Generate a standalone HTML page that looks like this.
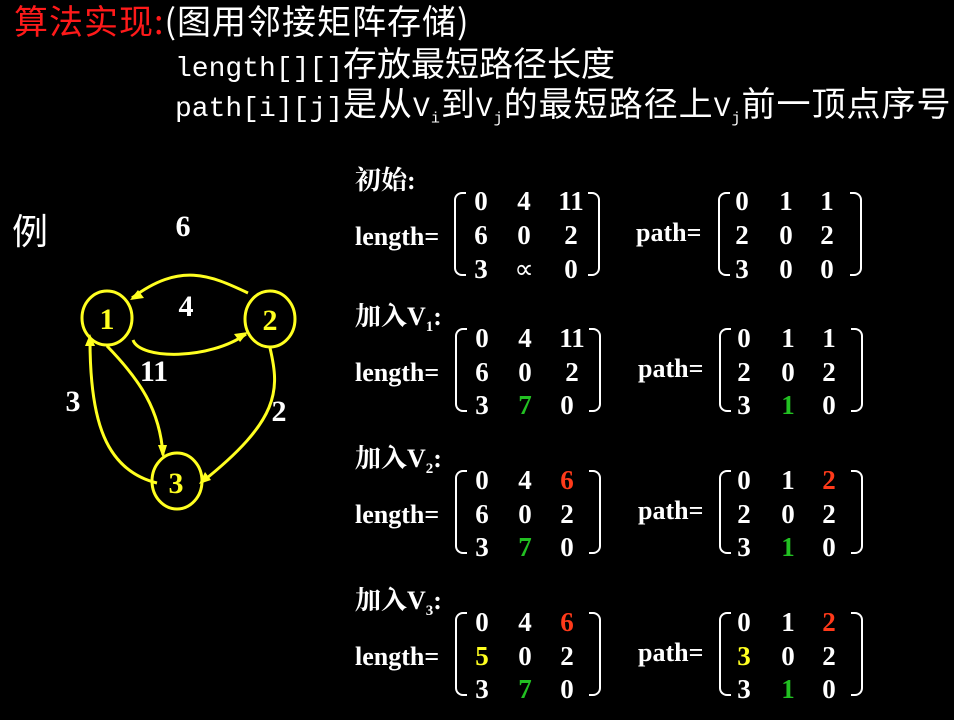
<!DOCTYPE html>
<html><head><meta charset="utf-8"><style>
body{margin:0;width:954px;height:720px;background:#000;overflow:hidden;position:relative;color:#fff}
.a{position:absolute;white-space:nowrap}
.h{font-family:"WenQuanYi Zen Hei","Noto Sans CJK SC",sans-serif;font-size:34px;line-height:36px}
.m{font-family:"Liberation Mono",monospace;font-size:28px}
.n{font-family:"Liberation Serif",serif;font-weight:bold;font-size:27px;line-height:26px;text-align:center;width:34px}
.l{font-family:"Liberation Serif","Noto Serif CJK SC",serif;font-weight:bold;font-size:26px}
.br{position:absolute;width:10px;border:2px solid #fff;border-radius:6px}
.g{color:#22c022}.r{color:#ff3a1a}.y{color:#ffff20}
sub{font-size:15px}
</style></head><body>
<div class="a h" style="left:14px;top:2px;letter-spacing:1px"><span style="color:#ff1a1a">算法实现:</span>(图用邻接矩阵存储)</div>
<div class="a h" style="left:175px;top:44px"><span class="m">length[][]</span>存放最短路径长度</div>
<div class="a h" style="left:175px;top:84px;letter-spacing:1px"><span class="m" style="letter-spacing:0">path[i][j]</span>是从<span class="m">V<sub>i</sub></span>到<span class="m">V<sub>j</sub></span>的最短路径上<span class="m">V<sub>j</sub></span>前一顶点序号</div>
<div class="a" style="left:12px;top:203px;font-family:'WenQuanYi Zen Hei',sans-serif;font-size:36px">例</div>
<svg class="a" style="left:0;top:0" width="340" height="520" viewBox="0 0 340 520">
<g fill="none" stroke="#ffff20" stroke-width="3">
<ellipse cx="107" cy="318" rx="25" ry="27"/>
<ellipse cx="270" cy="319" rx="25" ry="28"/>
<ellipse cx="177" cy="481" rx="25" ry="28"/>
<path d="M248 293 C210 275 180 262 132 298"/>
<path d="M133 340 C140 360 210 360 246 334"/>
<path d="M107 346 C140 380 160 410 163 455"/>
<path d="M157 483 C105 470 90 420 90 340"/>
<path d="M270 348 C280 390 280 420 202 482"/>
</g>
<g fill="#ffff20">
<path d="M130 300 l14 -2 l-6 -8z"/>
<path d="M248 332 l-14 2 l6 8z"/>
<path d="M163 458 l-5 -13 l9 0z"/>
<path d="M90 334 l-5 12 l10 0z"/>
<path d="M199 484 l6 -12 l6 8z"/>
</g>
<g font-family="Liberation Serif" font-weight="bold" font-size="30" fill="#ffff20" text-anchor="middle">
<text x="107" y="329">1</text><text x="270" y="330">2</text><text x="176" y="493">3</text></g>
<g font-family="Liberation Serif" font-size="30" fill="#fff" text-anchor="middle" font-weight="bold">
<text x="183" y="236">6</text><text x="186" y="316">4</text><text x="154" y="381">11</text><text x="73" y="411">3</text><text x="279" y="421">2</text></g>
</svg>

<div class="a l" style="left:355px;top:160px">初始:</div>
<div class="a l" style="left:355px;top:296px">加入V<sub>1</sub>:</div>
<div class="a l" style="left:355px;top:438px">加入V<sub>2</sub>:</div>
<div class="a l" style="left:355px;top:580px">加入V<sub>3</sub>:</div>

<div class="a l" style="left:355px;top:222px">length=</div>
<div class="a l" style="left:636px;top:218px">path=</div>
<div class="a l" style="left:355px;top:358px">length=</div>
<div class="a l" style="left:638px;top:354px">path=</div>
<div class="a l" style="left:355px;top:500px">length=</div>
<div class="a l" style="left:638px;top:496px">path=</div>
<div class="a l" style="left:355px;top:642px">length=</div>
<div class="a l" style="left:638px;top:638px">path=</div>

<div class="br" style="left:454px;top:192px;height:80px;border-right:none;border-radius:8px 0 0 8px"></div>
<div class="br" style="left:588px;top:192px;height:80px;border-left:none;border-radius:0 8px 8px 0"></div>
<div class="br" style="left:718px;top:192px;height:80px;border-right:none;border-radius:8px 0 0 8px"></div>
<div class="br" style="left:850px;top:192px;height:80px;border-left:none;border-radius:0 8px 8px 0"></div>
<div class="br" style="left:455px;top:328px;height:80px;border-right:none;border-radius:8px 0 0 8px"></div>
<div class="br" style="left:589px;top:328px;height:80px;border-left:none;border-radius:0 8px 8px 0"></div>
<div class="br" style="left:719px;top:328px;height:80px;border-right:none;border-radius:8px 0 0 8px"></div>
<div class="br" style="left:851px;top:328px;height:80px;border-left:none;border-radius:0 8px 8px 0"></div>
<div class="br" style="left:455px;top:470px;height:80px;border-right:none;border-radius:8px 0 0 8px"></div>
<div class="br" style="left:589px;top:470px;height:80px;border-left:none;border-radius:0 8px 8px 0"></div>
<div class="br" style="left:719px;top:470px;height:80px;border-right:none;border-radius:8px 0 0 8px"></div>
<div class="br" style="left:851px;top:470px;height:80px;border-left:none;border-radius:0 8px 8px 0"></div>
<div class="br" style="left:455px;top:612px;height:80px;border-right:none;border-radius:8px 0 0 8px"></div>
<div class="br" style="left:589px;top:612px;height:80px;border-left:none;border-radius:0 8px 8px 0"></div>
<div class="br" style="left:719px;top:612px;height:80px;border-right:none;border-radius:8px 0 0 8px"></div>
<div class="br" style="left:851px;top:612px;height:80px;border-left:none;border-radius:0 8px 8px 0"></div>

<div class="a n" style="left:464px;top:188px">0</div><div class="a n" style="left:507px;top:188px">4</div><div class="a n" style="left:554px;top:188px">11</div>
<div class="a n" style="left:464px;top:222px">6</div><div class="a n" style="left:507px;top:222px">0</div><div class="a n" style="left:554px;top:222px">2</div>
<div class="a n" style="left:464px;top:256px">3</div><div class="a n" style="left:507px;top:256px;font-weight:normal">∝</div><div class="a n" style="left:554px;top:256px">0</div>
<div class="a n" style="left:725px;top:188px">0</div><div class="a n" style="left:769px;top:188px">1</div><div class="a n" style="left:810px;top:188px">1</div>
<div class="a n" style="left:725px;top:222px">2</div><div class="a n" style="left:769px;top:222px">0</div><div class="a n" style="left:810px;top:222px">2</div>
<div class="a n" style="left:725px;top:256px">3</div><div class="a n" style="left:769px;top:256px">0</div><div class="a n" style="left:810px;top:256px">0</div>

<div class="a n" style="left:465px;top:325px">0</div><div class="a n" style="left:508px;top:325px">4</div><div class="a n" style="left:555px;top:325px">11</div>
<div class="a n" style="left:465px;top:359px">6</div><div class="a n" style="left:508px;top:359px">0</div><div class="a n" style="left:555px;top:359px">2</div>
<div class="a n" style="left:465px;top:392px">3</div><div class="a n g" style="left:508px;top:392px">7</div><div class="a n" style="left:550px;top:392px">0</div>
<div class="a n" style="left:727px;top:325px">0</div><div class="a n" style="left:771px;top:325px">1</div><div class="a n" style="left:812px;top:325px">1</div>
<div class="a n" style="left:727px;top:359px">2</div><div class="a n" style="left:771px;top:359px">0</div><div class="a n" style="left:812px;top:359px">2</div>
<div class="a n" style="left:727px;top:392px">3</div><div class="a n g" style="left:771px;top:392px">1</div><div class="a n" style="left:812px;top:392px">0</div>

<div class="a n" style="left:465px;top:467px">0</div><div class="a n" style="left:508px;top:467px">4</div><div class="a n r" style="left:550px;top:467px">6</div>
<div class="a n" style="left:465px;top:501px">6</div><div class="a n" style="left:508px;top:501px">0</div><div class="a n" style="left:550px;top:501px">2</div>
<div class="a n" style="left:465px;top:534px">3</div><div class="a n g" style="left:508px;top:534px">7</div><div class="a n" style="left:550px;top:534px">0</div>
<div class="a n" style="left:727px;top:467px">0</div><div class="a n" style="left:771px;top:467px">1</div><div class="a n r" style="left:812px;top:467px">2</div>
<div class="a n" style="left:727px;top:501px">2</div><div class="a n" style="left:771px;top:501px">0</div><div class="a n" style="left:812px;top:501px">2</div>
<div class="a n" style="left:727px;top:534px">3</div><div class="a n g" style="left:771px;top:534px">1</div><div class="a n" style="left:812px;top:534px">0</div>

<div class="a n" style="left:465px;top:609px">0</div><div class="a n" style="left:508px;top:609px">4</div><div class="a n r" style="left:550px;top:609px">6</div>
<div class="a n y" style="left:465px;top:643px">5</div><div class="a n" style="left:508px;top:643px">0</div><div class="a n" style="left:550px;top:643px">2</div>
<div class="a n" style="left:465px;top:676px">3</div><div class="a n g" style="left:508px;top:676px">7</div><div class="a n" style="left:550px;top:676px">0</div>
<div class="a n" style="left:727px;top:609px">0</div><div class="a n" style="left:771px;top:609px">1</div><div class="a n r" style="left:812px;top:609px">2</div>
<div class="a n y" style="left:727px;top:643px">3</div><div class="a n" style="left:771px;top:643px">0</div><div class="a n" style="left:812px;top:643px">2</div>
<div class="a n" style="left:727px;top:676px">3</div><div class="a n g" style="left:771px;top:676px">1</div><div class="a n" style="left:812px;top:676px">0</div>
</body></html>
